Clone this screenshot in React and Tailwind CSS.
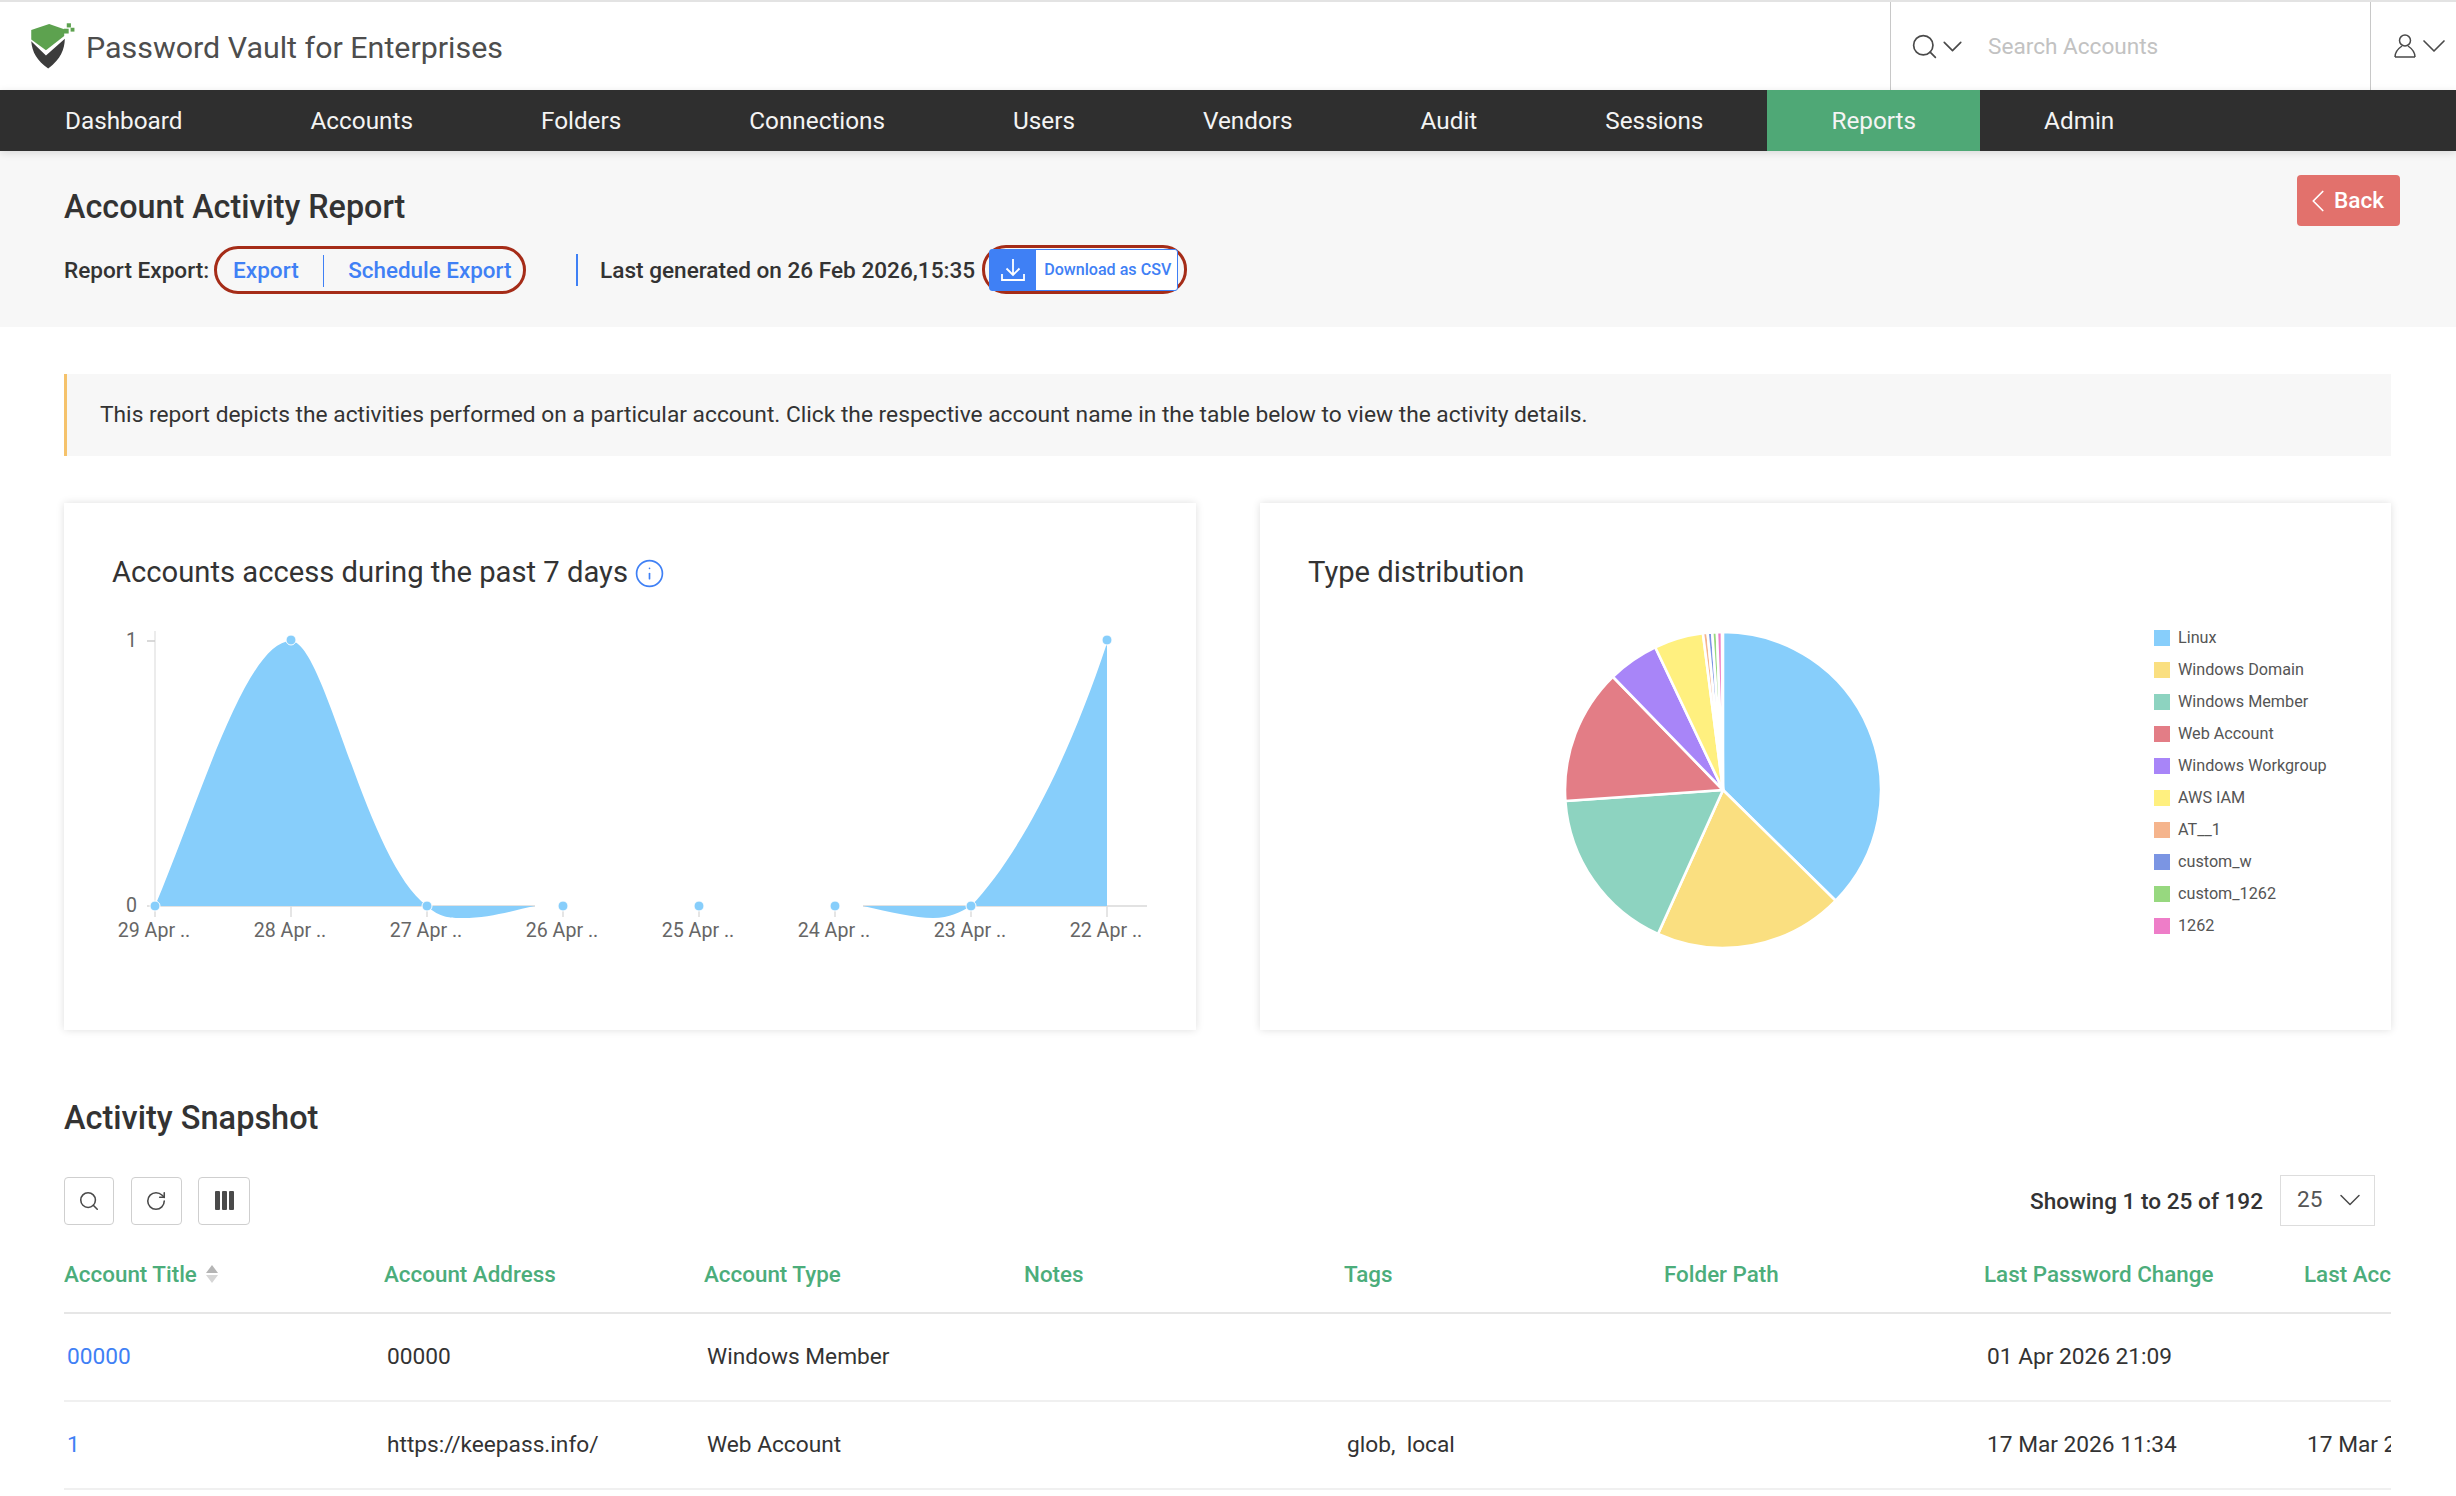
import React from 'react';
import { Search, ChevronDown, ChevronLeft, RotateCw, Info } from 'lucide-react';

const navItems = ['Dashboard', 'Accounts', 'Folders', 'Connections', 'Users', 'Vendors', 'Audit', 'Sessions', 'Reports', 'Admin'];

const xTicks = [
  [155, '29 Apr ..'], [291, '28 Apr ..'], [427, '27 Apr ..'], [563, '26 Apr ..'],
  [699, '25 Apr ..'], [835, '24 Apr ..'], [971, '23 Apr ..'], [1107, '22 Apr ..'],
];

const slices = [
  { name: 'Linux', color: '#87cefb', from: 0, to: 134.5 },
  { name: 'Windows Domain', color: '#fadf80', from: 134.5, to: 204.3 },
  { name: 'Windows Member', color: '#8dd3c0', from: 204.3, to: 266 },
  { name: 'Web Account', color: '#e37d86', from: 266, to: 315.8 },
  { name: 'Windows Workgroup', color: '#a885f8', from: 315.8, to: 334.6 },
  { name: 'AWS IAM', color: '#fff07f', from: 334.6, to: 352.7 },
  { name: 'AT__1', color: '#f5b48c', from: 352.7, to: 354.4 },
  { name: 'custom_w', color: '#7b95e3', from: 354.4, to: 356.1 },
  { name: 'custom_1262', color: '#97d87f', from: 356.1, to: 357.8 },
  { name: '1262', color: '#ee7dc8', from: 357.8, to: 359.6 },
];

const columns = ['Account Title', 'Account Address', 'Account Type', 'Notes', 'Tags', 'Folder Path', 'Last Password Change', 'Last Accessed'];

const rows = [
  ['00000', '00000', 'Windows Member', '', '', '', '01 Apr 2026 21:09', ''],
  ['1', 'https://keepass.info/', 'Web Account', '', 'glob,\u00a0 local', '', '17 Mar 2026 11:34', '17 Mar 2026 11:34'],
];

const slicePath = (from, to) => {
  const cx = 1723;
  const cy = 790;
  const r = 158;
  const point = (deg) => {
    const a = (deg * Math.PI) / 180;
    return `${(cx + r * Math.sin(a)).toFixed(2)} ${(cy - r * Math.cos(a)).toFixed(2)}`;
  };
  return `M${cx} ${cy} L${point(from)} A${r} ${r} 0 ${to - from > 180 ? 1 : 0} 1 ${point(to)} Z`;
};

const Logo = () => (
  <svg viewBox="25 30 150 150" className="w-[48px] h-[48px] shrink-0">
    <path d="M32 55 L88 36 L135 53 L135 74 L78 118 L32 85 Z" fill="#5da24f" />
    <path d="M32 90 L78 135 L137 82 C136 115 125 145 85 175 C50 150 35 125 32 90 Z" fill="#3c3c3c" />
    <rect x="143" y="34" width="13" height="13" fill="#5da24f" />
    <rect x="134" y="51" width="15" height="15" fill="#5da24f" />
    <rect x="155" y="48" width="12" height="12" fill="#5da24f" />
  </svg>
);

const UserIcon = () => (
  <svg viewBox="0 0 22 24" className="w-[22px] h-[24px] shrink-0" fill="none" stroke="#4a4a4a" strokeWidth="1.5">
    <circle cx="11" cy="6.5" r="5.5" />
    <path d="M1 23 C1 17 5 14 8 12 M21 23 C21 17 17 14 14 12 M1 23 H21" />
  </svg>
);

const ToolButton = ({ children, width }) => (
  <button className={`h-[48px] ${width} flex items-center justify-center border border-[#cfcfcf] rounded-[4px] bg-white`}>
    {children}
  </button>
);

const AccessChart = () => (
  <svg viewBox="64 591 1132 439" className="w-[1132px] h-[439px] block">
    <line x1="155" y1="631" x2="155" y2="906" stroke="#e6e6e6" strokeWidth="1.5" />
    <line x1="147" y1="641" x2="155" y2="641" stroke="#cccccc" strokeWidth="1.5" />
    <line x1="147" y1="906" x2="535" y2="906" stroke="#e2e2e2" strokeWidth="2" />
    <line x1="863" y1="906" x2="1147" y2="906" stroke="#e2e2e2" strokeWidth="2" />
    {xTicks.map(([x]) => (
      <line key={x} x1={x} y1="906" x2={x} y2="917" stroke="#dddddd" strokeWidth="1.5" />
    ))}
    <path d="M155 906 C200 800 246 641 291 641 C325 641 365 860 427 906 Z" fill="#87cefb" />
    <path d="M427 906 C440 918 450 918 463 918 C490 918 515 910 535 906 Z" fill="#87cefb" />
    <path d="M863 906 C890 912 915 918 933 918 C950 918 960 912 971 906 Z" fill="#87cefb" />
    <path d="M971 906 C1015 860 1065 770 1107 643 L1107 906 Z" fill="#87cefb" />
    {xTicks.map(([x, label], i) => (
      <g key={label}>
        <circle cx={x} cy={i === 1 || i === 7 ? 640 : 906} r="5" fill="#87cefb" stroke="#ffffff" strokeWidth="1" />
        <text x={x - 1} y="937" textAnchor="middle" fontSize="19.6" fill="#666666">{label}</text>
      </g>
    ))}
    <text x="137" y="647" textAnchor="end" fontSize="19.6" fill="#666666">1</text>
    <text x="137" y="912" textAnchor="end" fontSize="19.6" fill="#666666">0</text>
  </svg>
);

const TypePie = () => (
  <svg viewBox="1260 591 894 439" className="w-[894px] h-[439px] block shrink-0">
    {slices.map((s) => (
      <path key={s.name} d={slicePath(s.from, s.to)} fill={s.color} stroke="#ffffff" strokeWidth="2.6" strokeLinejoin="round" />
    ))}
  </svg>
);

export default function App() {
  return (
    <div className="w-[2456px] h-[1496px] overflow-hidden bg-white font-['Roboto',sans-serif] text-[#333333]">
      <div className="h-[2px] bg-[#e3e3e3]" />

      <header className="h-[88px] flex">
        <div className="flex items-center flex-1 pl-[29px] gap-[9px]">
          <Logo />
          <span className="mt-[3px] text-[30.4px] text-[#4d4d4d]">Password Vault for Enterprises</span>
        </div>
        <div className="w-[480px] flex items-center border-l-[1.5px] border-[#c8c8c8] pl-[19px]">
          <Search size={29} strokeWidth={1.4} color="#4a4a4a" className="shrink-0" />
          <ChevronDown size={33} strokeWidth={1.2} color="#4a4a4a" className="-ml-[3px] shrink-0" />
          <span className="ml-[19px] mt-[2px] text-[22.6px] text-[#c2c2c2]">Search Accounts</span>
        </div>
        <div className="w-[86px] flex items-center border-l-[1.5px] border-[#c8c8c8] pl-[23px]">
          <UserIcon />
          <ChevronDown size={40} strokeWidth={1} color="#4a4a4a" className="-ml-[2px] shrink-0" />
        </div>
      </header>

      <nav className="h-[61px] bg-[#2f2f2f] pl-px flex relative shadow-[0_2px_8px_rgba(0,0,0,0.12)]">
        {navItems.map((item) => (
          <a
            key={item}
            className={`flex items-center px-[64px] pt-[2px] text-[24.3px] text-[#f4f4f4] ${item === 'Reports' ? 'bg-[#4fa876]' : ''}`}
          >
            {item}
          </a>
        ))}
      </nav>

      <section className="h-[176px] bg-[#f7f7f7] pl-[64px] pr-[56px] flex justify-between">
        <div className="pt-[36px]">
          <h1 className="text-[32.3px] leading-[40px] font-medium">Account Activity Report</h1>
          <div className="mt-[18px] flex items-center text-[22.6px] font-medium whitespace-nowrap">
            <span className="w-[150px] pt-[2px]">Report Export:</span>
            <div className="w-[312px] h-[48px] flex items-center border-[3.5px] border-[#a52c18] rounded-[24px] pl-[16px] pt-[2px] text-[#3f80f5]">
              <a>Export</a>
              <span className="w-[1.5px] h-[32px] bg-[#3f80f5] ml-[24px] mr-[24px]" />
              <a className="text-[22.4px]">Schedule Export</a>
            </div>
            <span className="w-[2px] h-[32px] bg-[#3f80f5] ml-[50px] mr-[22px]" />
            <span className="pt-[2px]">Last generated on 26 Feb 2026,15:35</span>
            <div className="ml-[7px] w-[205px] h-[49px] flex items-center border-[3.5px] border-[#a52c18] rounded-[24px] pl-[4px]">
              <button className="h-[42px] w-[189px] flex items-center border border-[#3f80f5] rounded-[3px] bg-white">
                <span className="w-[46px] h-full bg-[#3f80f5] flex items-center justify-center">
                  <svg viewBox="0 0 24 24" className="w-[24px] h-[24px]" fill="none" stroke="#ffffff" strokeWidth="1.8">
                    <path d="M12 1 V17 M5.5 10.5 L12 17 L18.5 10.5 M1 16 V22 H23 V16" />
                  </svg>
                </span>
                <span className="ml-[8px] pt-[2px] text-[16.1px] text-[#3f80f5]">Download as CSV</span>
              </button>
            </div>
          </div>
        </div>
        <button className="mt-[24px] w-[103px] h-[51px] flex items-center pl-[2px] rounded-[4px] bg-[#e2716c] text-white text-[22.6px] font-medium">
          <ChevronLeft size={38} strokeWidth={1.1} className="-mr-[3px] shrink-0" />
          Back
        </button>
      </section>

      <main className="pl-[64px] w-[2391px]">
        <div className="mt-[47px] h-[82px] flex items-center border-l-[3px] border-[#f5c26b] bg-[#f7f7f7] pl-[33px] text-[22.75px]">
          This report depicts the activities performed on a particular account. Click the respective account name in the table below to view the activity details.
        </div>

        <div className="mt-[47px] flex gap-[64px]">
          <div className="w-[1132px] h-[527px] bg-white shadow-[0_0_8px_rgba(0,0,0,0.13)]">
            <div className="pt-[51px] pl-[48px] h-[88px] flex items-start gap-[6px] text-[29.2px] leading-[36px]">
              Accounts access during the past 7 days
              <Info size={31} strokeWidth={1.3} color="#3f80f5" className="mt-[4px]" />
            </div>
            <AccessChart />
          </div>
          <div className="w-[1131px] h-[527px] bg-white shadow-[0_0_8px_rgba(0,0,0,0.13)]">
            <div className="pt-[51px] pl-[48px] h-[88px] text-[29.2px] leading-[36px]">Type distribution</div>
            <div className="flex">
              <TypePie />
              <ul className="pt-[39px]">
                {slices.map((s) => (
                  <li key={s.name} className="h-[16px] mb-[16px] flex items-center gap-[8px] text-[16.2px] text-[#555555] whitespace-nowrap">
                    <span className="w-[16px] h-[16px]" style={{ backgroundColor: s.color }} />
                    {s.name}
                  </li>
                ))}
              </ul>
            </div>
          </div>
        </div>

        <h2 className="mt-[68px] text-[32.5px] leading-[40px] font-medium">Activity Snapshot</h2>

        <div className="mt-[37px] h-[51px] flex items-center">
          <div className="flex gap-[16.5px]">
            <ToolButton width="w-[50px]"><Search size={22} strokeWidth={1.7} color="#4a4a4a" /></ToolButton>
            <ToolButton width="w-[51px]"><RotateCw size={22} strokeWidth={1.7} color="#4a4a4a" /></ToolButton>
            <ToolButton width="w-[52px]">
              <span className="flex gap-[2px]">
                <span className="w-[5px] h-[19px] rounded-[1px] bg-[#4a4a4a]" />
                <span className="w-[5px] h-[19px] rounded-[1px] bg-[#4a4a4a]" />
                <span className="w-[5px] h-[19px] rounded-[1px] bg-[#4a4a4a]" />
              </span>
            </ToolButton>
          </div>
          <div className="ml-auto mr-[16px] flex items-center">
            <span className="pt-[2px] text-[22.6px] font-medium">Showing 1 to 25 of 192</span>
            <div className="ml-[17px] w-[95px] h-[51px] flex items-center border border-[#dddddd] pl-[16px] pb-[2px] text-[22.6px] text-[#555555]">
              25
              <ChevronDown size={36} strokeWidth={1} color="#4a4a4a" className="ml-[10px] shrink-0" />
            </div>
          </div>
        </div>

        <div className="overflow-hidden">
          <div className="grid grid-cols-[repeat(8,320px)] w-[2560px] h-[88px] pt-[11px] items-center border-b-2 border-[#e6e6e6] text-[22.4px] font-medium text-[#4cad7b]">
            {columns.map((c, i) => (
              <div key={c} className="flex items-center gap-[9px]">
                {c}
                {i === 0 && (
                  <svg viewBox="0 0 12 18" className="w-[12px] h-[18px]">
                    <path d="M6 0 L12 8 H0 Z" fill="#b5b5b5" />
                    <path d="M6 18 L12 10 H0 Z" fill="#d6d6d6" />
                  </svg>
                )}
              </div>
            ))}
          </div>
          {rows.map((row, r) => (
            <div key={r} className="grid grid-cols-[repeat(8,320px)] w-[2560px] h-[88px] items-center border-b-2 border-[#f0f0f0] text-[22.7px]">
              {row.map((cell, i) => (
                <div key={i} className={`pl-[3px] whitespace-nowrap ${i === 0 ? 'text-[#3f80f5]' : ''}`}>{cell}</div>
              ))}
            </div>
          ))}
        </div>
      </main>
    </div>
  );
}
